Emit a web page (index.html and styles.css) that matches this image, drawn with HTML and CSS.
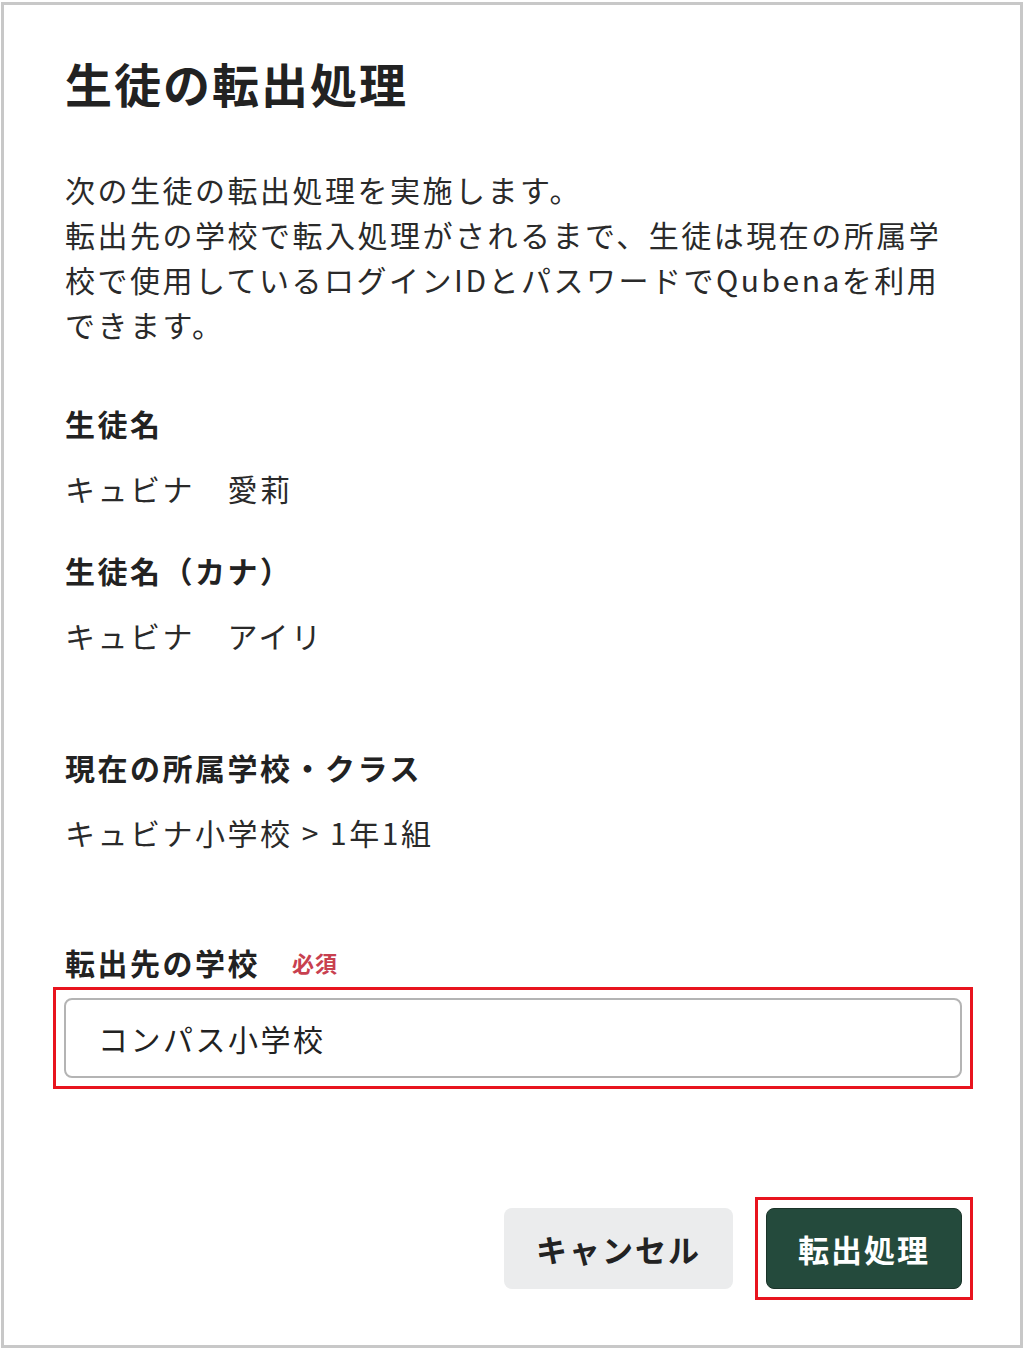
FILE: index.html
```html
<!DOCTYPE html>
<html lang="ja">
<head>
<meta charset="utf-8">
<title>生徒の転出処理</title>
<link rel="stylesheet" href="styles.css">
</head>
<body>
<div class="frame">
  <h1 class="title">生徒の転出処理</h1>
  <p class="lead">次の生徒の転出処理を実施します。<br>転出先の学校で転入処理がされるまで、生徒は現在の所属学<br>校で使用しているログインIDとパスワードでQubenaを利用<br>できます。</p>

  <div class="field field-first">
    <div class="label">生徒名</div>
    <div class="value">キュビナ　愛莉</div>
  </div>
  <div class="field field-kana">
    <div class="label">生徒名（カナ）</div>
    <div class="value">キュビナ　アイリ</div>
  </div>
  <div class="field field-school">
    <div class="label">現在の所属学校・クラス</div>
    <div class="value">キュビナ小学校 &gt; 1年1組</div>
  </div>

  <div class="field field-dest">
    <div class="label label-row">転出先の学校<span class="required">必須</span></div>
    <div class="highlight highlight-input">
      <div class="input">コンパス小学校</div>
    </div>
  </div>

  <div class="actions">
    <button class="btn btn-cancel">キャンセル</button>
    <div class="highlight highlight-btn">
      <button class="btn btn-primary">転出処理</button>
    </div>
  </div>
</div>
</body>
</html>
```
FILE: styles.css
```css
* { box-sizing: border-box; }
html, body { margin: 0; padding: 0; background: #ffffff; }
body {
  font-family: "Noto Sans CJK JP", "Noto Sans", sans-serif;
  color: #222222;
}
.frame {
  margin: 2px 1px 1px 1px;
  width: 1022px;
  height: 1346px;
  border: 3px solid #c8c8c8;
  padding: 50px 58px 0 61px;
  display: flex;
  flex-direction: column;
}
.title {
  margin: 0;
  font-size: 47px;
  line-height: 56px;
  font-weight: 700;
  letter-spacing: 2px;
  color: #222222;
}
.lead {
  margin: 56px 0 0 0;
  font-size: 30px;
  line-height: 45px;
  letter-spacing: 2.5px;
  white-space: nowrap;
  color: #2a2a2a;
}
.field { display: flex; flex-direction: column; }
.field-first { margin-top: 56px; }
.field-kana { margin-top: 42px; }
.field-school { margin-top: 92px; }
.field-dest { margin-top: 90px; }
.label {
  font-size: 30px;
  line-height: 40px;
  font-weight: 700;
  letter-spacing: 2.5px;
  color: #222222;
}
.value {
  margin-top: 25px;
  font-size: 30px;
  line-height: 40px;
  letter-spacing: 2.5px;
  color: #2a2a2a;
}
.label-row { display: flex; align-items: center; }
.required {
  margin-left: 32px;
  font-size: 22px;
  font-weight: 700;
  letter-spacing: 1px;
  color: #c8404f;
}
.highlight {
  border: 3px solid #e8141e;
  padding: 8px;
}
.highlight-input {
  margin: 5px -11px 0 -12px;
}
.input {
  height: 80px;
  border: 2px solid #b4b4b4;
  border-radius: 8px;
  padding: 0 0 0 32px;
  display: flex;
  align-items: center;
  font-size: 30px;
  letter-spacing: 2.5px;
  color: #222222;
}
.actions {
  margin: 108px -11px 0 0;
  display: flex;
  justify-content: flex-end;
  align-items: center;
  gap: 22px;
}
.highlight-btn { padding: 8px; }
.btn {
  font-family: "Noto Sans CJK JP", "Noto Sans", sans-serif;
  height: 81px;
  border: none;
  border-radius: 8px;
  font-size: 31px;
  font-weight: 700;
  letter-spacing: 2px;
  display: flex;
  align-items: center;
  justify-content: center;
  cursor: pointer;
}
.btn-cancel {
  width: 229px;
  background: #ebeced;
  color: #222222;
}
.btn-primary {
  width: 196px;
  background: #244a3c;
  color: #ffffff;
  border: 1px solid #1a3329;
}
```
